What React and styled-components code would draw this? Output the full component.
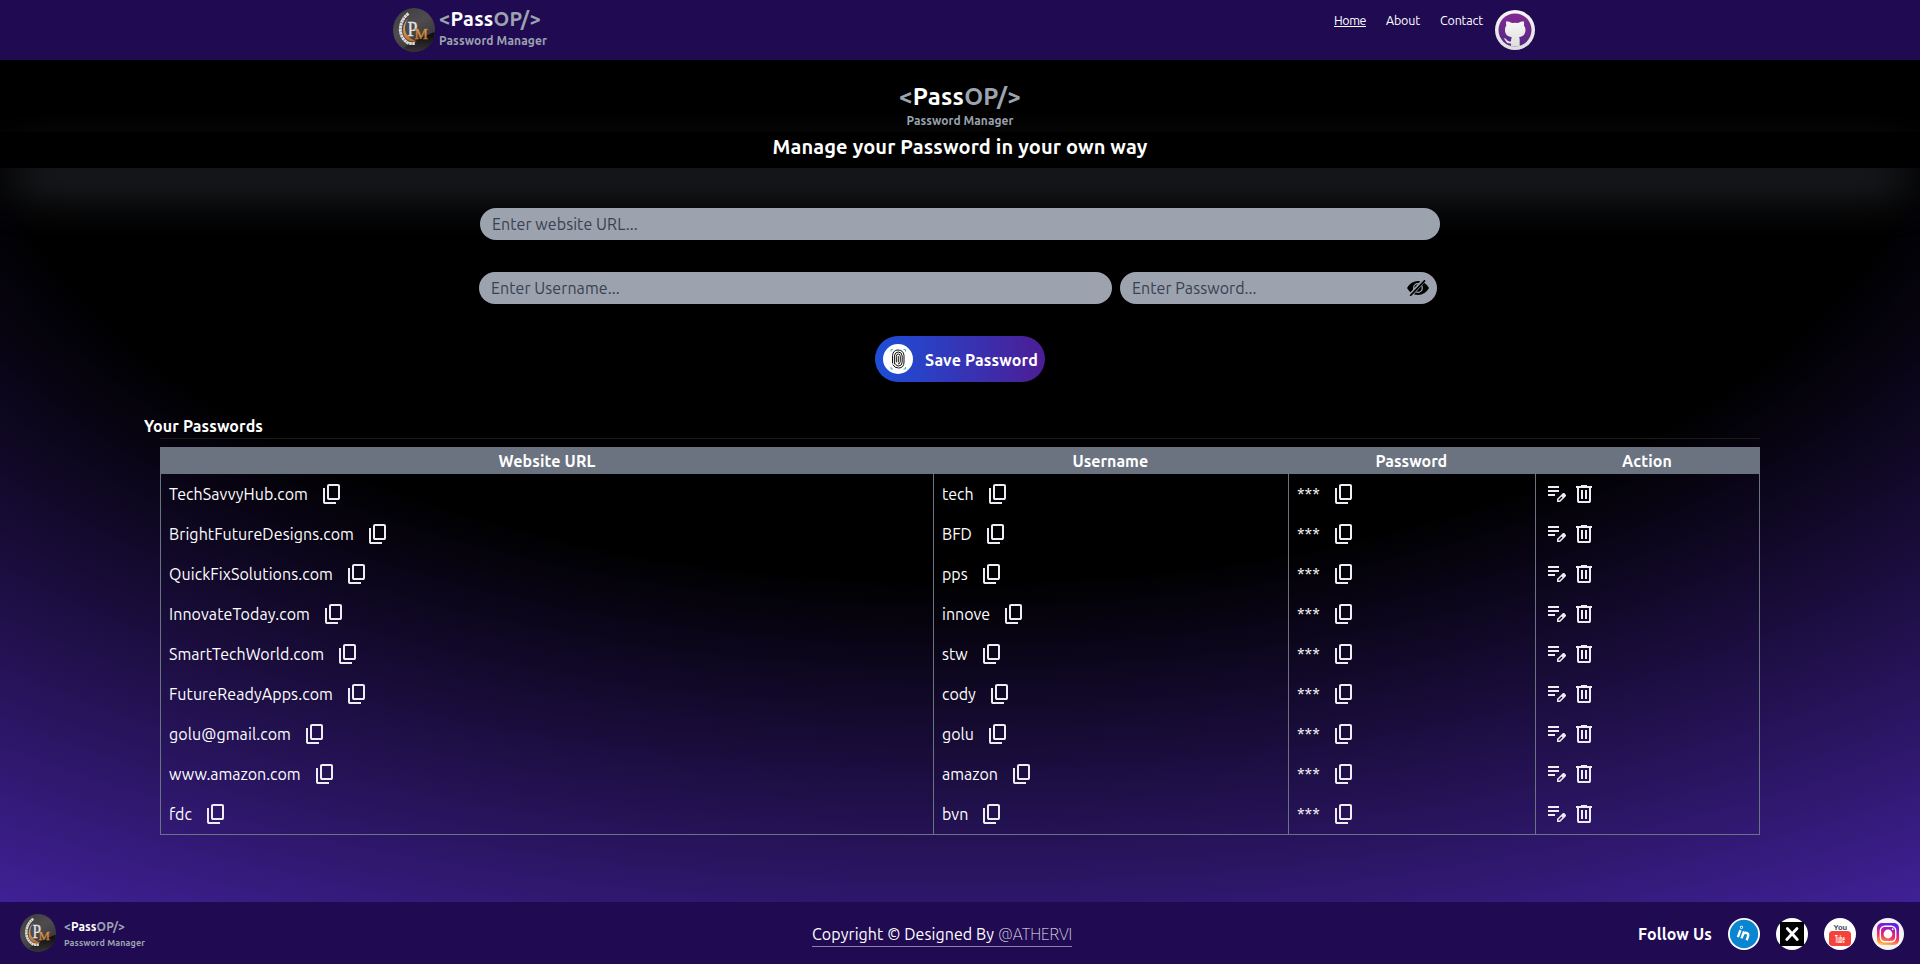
import React, { useLayoutEffect, useRef, useState } from 'react';
import styled, { createGlobalStyle } from 'styled-components';

const GlobalStyle = createGlobalStyle`
  *, *::before, *::after { box-sizing: border-box; }
  html, body { margin: 0; padding: 0; background: #000; }
  body { font-family: Ubuntu, "Noto Sans", "Open Sans", sans-serif; font-size: 16px; color: #fff; overflow: hidden; }
  a { color: inherit; text-decoration: none; }
  svg { display: block; flex: none; }
`;

/* Text whose letter spacing is adjusted so that it fills a given width. */
const FitBox = styled.span`
  display: inline-block;
  flex: none;
  white-space: nowrap;
  text-decoration: inherit;
  text-underline-offset: inherit;
  width: ${(p) => p.$width}px;
`;

function Fit({ width, children }) {
  const ref = useRef(null);
  const [spacing, setSpacing] = useState(0);
  useLayoutEffect(() => {
    const el = ref.current;
    const range = document.createRange();
    range.selectNodeContents(el);
    const natural = range.getBoundingClientRect().width;
    const count = el.textContent.length;
    const slack = width - natural;
    if (count > 1 && Math.abs(slack) > 0.5) setSpacing(slack / count);
  }, [width]);
  return (
    <FitBox ref={ref} $width={width} style={{ letterSpacing: spacing ? `${spacing}px` : 'normal' }}>
      {children}
    </FitBox>
  );
}

const Page = styled.div`
  display: flex;
  flex-direction: column;
  height: 964px;
  width: 1920px;
  background: radial-gradient(125% 125% at 50% 10%, #000 40%, #63e 100%);
`;

const Header = styled.header`
  display: flex;
  justify-content: space-between;
  align-items: flex-start;
  height: 60px;
  padding: 0 385px 0 393px;
  background: #200a52;
`;

const Brand = styled.div`
  display: flex;
  align-items: flex-start;
  gap: ${(p) => p.$gap}px;
  padding-top: ${(p) => p.$top}px;
`;

const BrandText = styled.div`
  display: flex;
  flex-direction: column;
  align-items: ${(p) => (p.$centered ? 'center' : 'flex-start')};
  margin-top: ${(p) => p.$shift || 0}px;
`;

const BrandName = styled.div`
  font-weight: 700;
  font-size: ${(p) => p.$size}px;
  line-height: ${(p) => p.$line}px;
  height: ${(p) => p.$line}px;
`;

const Muted = styled.span`
  color: #9ca3af;
`;

const BrandNote = styled.div`
  font-weight: 700;
  color: #9ca3af;
  font-size: ${(p) => p.$size}px;
  line-height: ${(p) => p.$line}px;
  height: ${(p) => p.$line}px;
`;

const Nav = styled.nav`
  display: flex;
  align-items: flex-start;
  font-size: 12.5px;
  line-height: 18px;
`;

const NavLink = styled.a`
  margin: 11px ${(p) => p.$after}px 0 0;
  text-decoration: ${(p) => (p.$active ? 'underline' : 'none')};
`;

const GithubLink = styled.a`
  margin-top: 10px;
`;

const Hero = styled.section`
  display: flex;
  flex-direction: column;
  align-items: center;
  padding-top: 21px;
  height: 72px;
`;

const Slogan = styled.h1`
  margin: 0;
  height: 36px;
  background: #000;
  box-shadow: 0 25px 50px -12px #6b7280;
  text-align: center;
  font-size: 20px;
  font-weight: 700;
  line-height: 29px;
`;

const Form = styled.form`
  display: flex;
  flex-direction: column;
  align-items: center;
  padding-top: 40px;
  position: relative;
`;

const Field = styled.label`
  display: flex;
  align-items: center;
  width: ${(p) => p.$width}px;
  height: 32px;
  padding: 0 8px 0 12px;
  border-radius: 16px;
  background: #9ca3af;
`;

const Input = styled.input`
  flex: 1;
  min-width: 0;
  height: 32px;
  padding: 0;
  border: 0;
  outline: 0;
  background: transparent;
  font: inherit;
  letter-spacing: 0.07px;
  &::placeholder { color: #374151; opacity: 1; }
`;

const Credentials = styled.div`
  display: flex;
  gap: 8px;
  margin: 32px 4px 32px 0;
`;

const SaveButton = styled.button`
  display: flex;
  align-items: center;
  gap: 12px;
  width: 170px;
  height: 46px;
  padding: 0 8px;
  border: 0;
  border-radius: 23px;
  background: linear-gradient(to right, #1d4ed8, #4c1d95);
  color: #fff;
  font: inherit;
  font-weight: 700;
`;

const SaveLabel = styled.span`
  padding-top: 2px;
`;

const Vault = styled.section`
  padding: 33px 160px 0 144px;
`;

const VaultTitle = styled.h2`
  margin: 0;
  height: 23px;
  font-size: 16px;
  line-height: 23px;
  font-weight: 700;
`;

const Rule = styled.div`
  height: 1px;
  margin: 0 0 8px 16px;
  background: #1b1b1b;
`;

const Table = styled.div`
  margin-left: 16px;
  width: 1600px;
  border: 1px solid #6b7280;
  border-top: 0;
`;

const Row = styled.div`
  display: grid;
  grid-template-columns: 772px 355px 247px 224px;
`;

const HeadRow = styled(Row)`
  height: 27px;
  background: #6b7280;
`;

const HeadCell = styled.div`
  display: flex;
  justify-content: center;
  align-items: center;
  height: 28px;
  font-weight: 700;
`;

const Cell = styled.div`
  display: flex;
  align-items: center;
  gap: ${(p) => p.$gap ?? 12}px;
  height: 40px;
  padding-left: 8px;
  border-left: ${(p) => (p.$first ? '0' : '1px solid #6b7280')};
`;

const Footer = styled.footer`
  display: grid;
  grid-template-columns: 812px 1fr auto;
  height: 62px;
  margin-top: auto;
  padding-right: 16px;
  background: #200a52;
`;

const FooterBrand = styled(Brand)`
  padding-left: 20px;
`;

const Credit = styled.div`
  display: flex;
  gap: 4px;
  align-self: start;
  justify-self: start;
  margin-top: 19px;
  height: 26px;
  line-height: 27px;
  border-bottom: 1px solid #8d83a8;
`;

const Handle = styled.a`
  font-weight: 100;
  color: #f3f1f8;
`;

const Social = styled.div`
  display: flex;
  gap: 16px;
  padding-top: 16px;
  line-height: 32px;
  font-weight: 700;
`;

const SocialLink = styled.a`
  width: 32px;
  height: 32px;
`;

function BrandMark({ id, width, height }) {
  return (
    <svg width={width} height={height} viewBox="0 0 42 44" preserveAspectRatio="none">
      <defs>
        <linearGradient id={`${id}-bg`} x1="0" y1="0" x2=".6" y2="1">
          <stop offset="0" stopColor="#3c3a3c" />
          <stop offset=".5" stopColor="#4f4c4f" />
          <stop offset="1" stopColor="#333133" />
        </linearGradient>
        <linearGradient id={`${id}-gold`} x1="0" y1="0" x2="0" y2="1">
          <stop offset="0" stopColor="#e9c480" />
          <stop offset="1" stopColor="#c06a20" />
        </linearGradient>
        <linearGradient id={`${id}-shade`} x1="0" y1="0" x2="0" y2="1">
          <stop offset="0" stopColor="#0b0a0b" />
          <stop offset="1" stopColor="#343234" />
        </linearGradient>
      </defs>
      <ellipse cx="21" cy="22" rx="21" ry="22" fill={`url(#${id}-bg)`} />
      <path d="M18 34 41.500 24Q42 36 31 41.500Q20 46 11 40Z" fill={`url(#${id}-shade)`} />
      <path d="M15.500 5.500Q8 11 7.300 21Q7.500 31 16 35.500L22 35.500" fill="none" stroke="#dcdbda" strokeWidth="3" strokeDasharray="2.600 .4" />
      <path d="M15.500 10Q11.500 15 12 22Q13.500 30 24 33.500Q14 35 10.500 26.500Q8.500 17 15.500 10Z" fill={`url(#${id}-gold)`} />
      <text transform="translate(14.500 28) scale(.85 1)" fontFamily="Liberation Serif, serif" fontSize="21" fill="#e3e3e5" stroke="#e3e3e5" strokeWidth=".3">P</text>
      <text x="21.500" y="30.500" fontFamily="Liberation Serif, serif" fontSize="15" fill={`url(#${id}-gold)`} stroke="#c87a32" strokeWidth=".5">M</text>
    </svg>
  );
}

function GithubMark() {
  return (
    <svg width="40" height="40" viewBox="0 0 40 40">
      <defs>
        <linearGradient id="gh-ring" x1="0" y1="0" x2="0" y2="1">
          <stop offset="0" stopColor="#f7f7f7" />
          <stop offset="1" stopColor="#dedede" />
        </linearGradient>
        <linearGradient id="gh-disc" x1="0" y1="0" x2="0" y2="1">
          <stop offset="0" stopColor="#842a94" />
          <stop offset="1" stopColor="#522784" />
        </linearGradient>
      </defs>
      <circle cx="20" cy="20" r="20" fill="url(#gh-ring)" />
      <circle cx="20" cy="20" r="16.500" fill="url(#gh-disc)" />
      <path
        d="M11.300 11.200Q14.500 11.300 17 13Q20 12.300 23 13Q25.700 11.200 28.700 11.200Q29.600 13.300 29 15.600Q31 18 30.300 21.500Q29.500 26.500 24 27.200Q24.700 28 24.700 30L24.700 36Q20 37 16 36L16 33.400Q12 34 10.600 31Q9.800 29 8.600 28.500Q10.600 27.900 12 30Q13.400 32 16 31.200Q16 28.500 16.800 27.200Q11 26.500 10 21.500Q9.300 18 11.300 15.600Q10.400 13.300 11.300 11.200Z"
        fill="url(#gh-ring)"
      />
    </svg>
  );
}

function HiddenEye() {
  return (
    <svg width="22" height="16" viewBox="0 0 22 16">
      <path d="M0 8Q4 1 11 1Q18 1 22 8Q18 15 11 15Q4 15 0 8Z" />
      <circle cx="11" cy="8" r="4.300" fill="none" stroke="#9ca3af" strokeWidth="1.300" />
      <path d="M3.200 15.500 17.200 0" stroke="#9ca3af" strokeWidth="4" />
      <path d="M3.200 15.800 18 .3" stroke="#000" strokeWidth="1.700" />
    </svg>
  );
}

function Fingerprint() {
  return (
    <svg width="30" height="30" viewBox="0 0 30 30">
      <circle cx="15" cy="15" r="15" fill="#fff" />
      <g fill="none" stroke="#111" strokeWidth="1" strokeLinecap="round">
        <path d="M9.500 19V11.500Q10.200 6 15 6Q20.500 6 21 11.500V18Q21 24 15.500 24Q11.500 24 10 21" />
        <path d="M11.400 20V12Q12 8 15.200 8Q19 8 19.200 12V18Q19 22 15.500 22Q13 22 12.500 20" />
        <path d="M13.300 18V12.500Q13.500 10 15.300 10Q17.300 10 17.300 12.500V17.500Q17 20 15.300 20" />
        <path d="M15.300 12.500V18" />
      </g>
      <path d="M8 7.500V5.500H10M20.500 5.500H22.500V7.500M22.500 23V25H20.500M10 25H8V23" fill="none" stroke="#35bcc8" strokeWidth="1" />
    </svg>
  );
}

const GLYPHS = {
  copy: 'M9 18q-.825 0-1.412-.587T7 16V4q0-.825.588-1.412T9 2h9q.825 0 1.413.588T20 4v12q0 .825-.587 1.413T18 18zm0-2h9V4H9zm-4 6q-.825 0-1.412-.587T3 20V6h2v14h11v2z',
  edit: 'M4 14v-2h7v2zm0-4V8h11v2zm0-4V4h11v2zm9 14v-3.075l5.525-5.5q.225-.225.5-.325t.55-.1q.3 0 .575.113t.5.337l.925.925q.2.225.313.5t.112.55t-.1.563t-.325.512l-5.5 5.5zm1.500-1.500h.95l3.025-3.050l-.45-.475l-.475-.45l-3.050 3.025z',
  trash: 'M7 21q-.825 0-1.412-.587T5 19V6H4V4h5V3h6v1h5v2h-1v13q0 .825-.587 1.413T17 21zM17 6H7v13h10zM9 17h2V8H9zm4 0h2V8h-2z',
};

function Glyph({ name }) {
  return (
    <svg width="24" height="24" viewBox="0 0 24 24" fill="#eeedf3">
      <path fillRule="evenodd" d={GLYPHS[name]} />
    </svg>
  );
}

function LinkedinMark() {
  return (
    <svg width="32" height="32" viewBox="0 0 32 32">
      <circle cx="16" cy="16" r="16" fill="#fff" />
      <circle cx="16" cy="16" r="14.200" fill="#0a86d0" />
      <g transform="rotate(20 16 16)" fill="none" stroke="#fff" strokeWidth="2.400">
        <path d="M11.300 13.500V21M15.200 21V13.500M15.200 17Q15.500 14.200 18 14.200Q20.600 14.200 20.600 17V21" />
        <circle cx="11.300" cy="10.600" r=".4" />
      </g>
    </svg>
  );
}

function XMark() {
  return (
    <svg width="32" height="32" viewBox="0 0 32 32">
      <circle cx="16" cy="16" r="16" fill="#fff" />
      <path d="M4 4H28V28H4Z" fill="#000" />
      <path d="M11.300 10.500 21.300 21.500M21 10.500 10.800 21.500" stroke="#fff" strokeWidth="2.800" strokeLinecap="round" />
    </svg>
  );
}

function YoutubeMark() {
  return (
    <svg width="32" height="32" viewBox="0 0 32 32">
      <circle cx="16" cy="16" r="16" fill="#fff" />
      <text transform="translate(9.500 12) scale(1.080 1)" fontFamily="Liberation Sans, sans-serif" fontWeight="700" fontSize="7" fill="#3b4856">You</text>
      <rect x="5" y="13" width="22" height="15" rx="3.500" fill="#f5433a" />
      <text transform="translate(11 25) scale(.37 1)" fontFamily="Liberation Sans, sans-serif" fontWeight="700" fontSize="11.500" fill="#fff">Tube</text>
    </svg>
  );
}

function InstagramMark() {
  return (
    <svg width="32" height="32" viewBox="0 0 32 32">
      <defs>
        <linearGradient id="ig-top" x1=".6" y1="0" x2=".35" y2="1">
          <stop offset="0" stopColor="#5522f0" />
          <stop offset=".3" stopColor="#a81bb8" />
          <stop offset=".6" stopColor="#f42a64" />
          <stop offset="1" stopColor="#ffc23a" />
        </linearGradient>
      </defs>
      <circle cx="16" cy="16" r="16" fill="#f4f3f7" />
      <rect x="5" y="5" width="22" height="22" rx="5" fill="url(#ig-top)" />
      <rect x="8.300" y="8.300" width="15.400" height="15.400" rx="4.500" fill="none" stroke="#fff" strokeWidth="1.400" />
      <circle cx="16" cy="16" r="4.400" fill="#fff" />
      <circle cx="20.700" cy="11.200" r=".9" fill="#fff" />
    </svg>
  );
}

function BrandTitle({ size, line, width }) {
  return (
    <BrandName $size={size} $line={line}>
      <Fit width={width}>
        <Muted>&lt;</Muted>Pass<Muted>OP/&gt;</Muted>
      </Fit>
    </BrandName>
  );
}

const ENTRIES = [
  { site: 'TechSavvyHub.com', siteWidth: 139, user: 'tech', userWidth: 32 },
  { site: 'BrightFutureDesigns.com', siteWidth: 185, user: 'BFD', userWidth: 30 },
  { site: 'QuickFixSolutions.com', siteWidth: 164, user: 'pps', userWidth: 26 },
  { site: 'InnovateToday.com', siteWidth: 141, user: 'innove', userWidth: 48 },
  { site: 'SmartTechWorld.com', siteWidth: 155, user: 'stw', userWidth: 26 },
  { site: 'FutureReadyApps.com', siteWidth: 164, user: 'cody', userWidth: 34 },
  { site: 'golu@gmail.com', siteWidth: 122, user: 'golu', userWidth: 32 },
  { site: 'www.amazon.com', siteWidth: 132, user: 'amazon', userWidth: 56 },
  { site: 'fdc', siteWidth: 23, user: 'bvn', userWidth: 26 },
];

const COLUMNS = [
  ['Website URL', 97],
  ['Username', 76],
  ['Password', 72],
  ['Action', 50],
];

export default function App() {
  return (
    <>
      <GlobalStyle />
      <Page>
        <Header>
          <Brand $gap={4} $top={8}>
            <BrandMark id="top" width={42} height={44} />
            <BrandText $shift={-3}>
              <BrandTitle size={20} line={28} width={102} />
              <BrandNote $size={12} $line={16}><Fit width={108}>Password Manager</Fit></BrandNote>
            </BrandText>
          </Brand>
          <Nav>
            <NavLink href="#" $active $after={20}><Fit width={32}>Home</Fit></NavLink>
            <NavLink href="#" $after={20}><Fit width={34}>About</Fit></NavLink>
            <NavLink href="#" $after={12}><Fit width={43}>Contact</Fit></NavLink>
            <GithubLink href="#"><GithubMark /></GithubLink>
          </Nav>
        </Header>

        <Hero>
          <BrandText $centered>
            <BrandTitle size={24} line={32} width={122} />
            <BrandNote $size={12} $line={16}><Fit width={107}>Password Manager</Fit></BrandNote>
          </BrandText>
        </Hero>
        <Slogan><Fit width={375}>Manage your Password in your own way</Fit></Slogan>

        <Form onSubmit={(e) => e.preventDefault()}>
          <Field $width={960}><Input placeholder="Enter website URL..." /></Field>
          <Credentials>
            <Field $width={633}><Input placeholder="Enter Username..." /></Field>
            <Field $width={317}>
              <Input placeholder="Enter Password..." />
              <HiddenEye />
            </Field>
          </Credentials>
          <SaveButton>
            <Fingerprint />
            <SaveLabel><Fit width={113}>Save Password</Fit></SaveLabel>
          </SaveButton>
        </Form>

        <Vault>
          <VaultTitle><Fit width={119}>Your Passwords</Fit></VaultTitle>
          <Rule />
          <Table>
            <HeadRow>
              {COLUMNS.map(([label, width]) => (
                <HeadCell key={label}><Fit width={width}>{label}</Fit></HeadCell>
              ))}
            </HeadRow>
            {ENTRIES.map((entry) => (
              <Row key={entry.site}>
                <Cell $first><Fit width={entry.siteWidth}>{entry.site}</Fit><Glyph name="copy" /></Cell>
                <Cell><Fit width={entry.userWidth}>{entry.user}</Fit><Glyph name="copy" /></Cell>
                <Cell><Fit width={23}>***</Fit><Glyph name="copy" /></Cell>
                <Cell $gap={4}><Glyph name="edit" /><Glyph name="trash" /></Cell>
              </Row>
            ))}
          </Table>
        </Vault>

        <Footer>
          <FooterBrand $gap={8} $top={12}>
            <BrandMark id="bottom" width={36} height={38} />
            <BrandText $shift={5}>
              <BrandTitle size={12} line={16} width={61} />
              <BrandNote $size={9} $line={16}><Fit width={81}>Password Manager</Fit></BrandNote>
            </BrandText>
          </FooterBrand>
          <Credit>
            <Fit width={182}>Copyright © Designed By</Fit>
            <Handle href="#"><Fit width={74}>@ATHERVI</Fit></Handle>
          </Credit>
          <Social>
            <Fit width={74}>Follow Us</Fit>
            <SocialLink href="#"><LinkedinMark /></SocialLink>
            <SocialLink href="#"><XMark /></SocialLink>
            <SocialLink href="#"><YoutubeMark /></SocialLink>
            <SocialLink href="#"><InstagramMark /></SocialLink>
          </Social>
        </Footer>
      </Page>
    </>
  );
}
